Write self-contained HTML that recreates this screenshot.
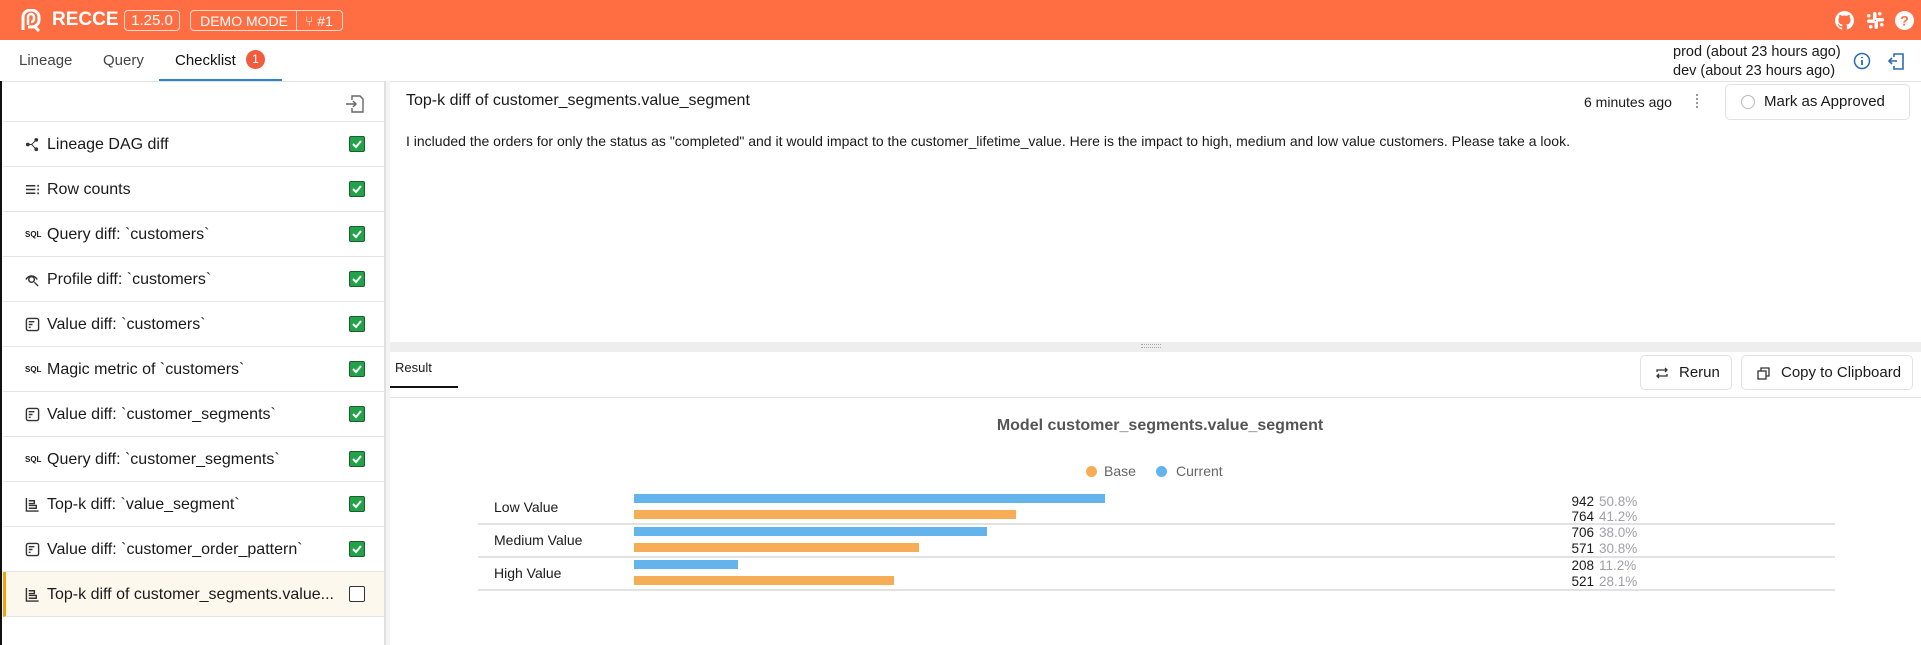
<!DOCTYPE html>
<html><head><meta charset="utf-8"><style>
*{box-sizing:border-box;margin:0;padding:0}
body{width:1921px;height:645px;overflow:hidden;background:#fff;font-family:"Liberation Sans",sans-serif;color:#1a1a1a;position:relative}
.a{position:absolute;white-space:nowrap}
.hdr{left:0;top:0;width:1921px;height:40px;background:#FF6E42}
.badge{border:1.5px solid rgba(255,255,255,.75);border-radius:4px;color:#fff;font-size:15px;height:21px;line-height:18px;padding:0 6px;top:10px;display:flex;align-items:center;justify-content:center}
.item{left:3px;width:381px;height:45px;border-bottom:1px solid #e4e4e4}
.item .t{position:absolute;left:44px;top:14px;font-size:16px}
.item .ic{position:absolute;left:22px;top:15px;width:15px;height:15px}
.cb{position:absolute;left:346px;top:14px;width:16px;height:16px;border-radius:2px;background:#22A34A;border:1px solid #1f5a30}
.cb svg{position:absolute;left:1px;top:1px}
.btn{border:1px solid #e2e2e2;border-radius:5px;background:#fff;font-size:15px}
.bar{position:absolute;left:634px;height:9px}
.b{background:#63B3ED}.o{background:#F6AD55}
.num{font-size:13.5px;width:60px;text-align:right;left:1534px}
.pct{font-size:13.5px;left:1599px;color:#a0a0a8}
.sep{left:478px;width:1357px;height:2px;background:#e2e2e2}
</style></head><body>
<div class="a hdr"></div>
<svg class="a" style="left:20px;top:9px" width="22" height="23" viewBox="0 0 22 23"><path d="M3 21V8a8 7 0 0 1 16 0v3a8 7 0 0 1-8 7h-3" fill="none" stroke="#fff" stroke-width="3"/><path d="M8 16V8a3 3 0 0 1 6 0v2a3 3 0 0 1-3 3" fill="none" stroke="#fff" stroke-width="2.5"/><path d="M14 17l5 5" stroke="#fff" stroke-width="3"/></svg>
<div class="a" style="left:52px;top:9px;color:#fff;font-weight:bold;font-size:19px">RECCE</div>
<div class="a badge" style="left:124px;width:56px">1.25.0</div>
<div class="a badge" style="left:190px;width:153px;font-size:14px">DEMO MODE <span style="display:inline-block;width:1px;height:19px;background:rgba(255,255,255,.7);margin:0 8px"></span>⑂ #1</div>
<svg class="a" style="left:1835px;top:11px" width="19" height="19" viewBox="0 0 16 16"><path fill="#fff" d="M8 0C3.6 0 0 3.6 0 8c0 3.5 2.3 6.5 5.5 7.6.4.1.5-.2.5-.4v-1.4c-2.2.5-2.7-1-2.7-1-.4-.9-.9-1.2-.9-1.2-.7-.5.1-.5.1-.5.8.1 1.2.8 1.2.8.7 1.2 1.9.9 2.3.7.1-.5.3-.9.5-1.1-1.8-.2-3.6-.9-3.6-4 0-.9.3-1.6.8-2.1-.1-.2-.4-1 .1-2.1 0 0 .7-.2 2.2.8.6-.2 1.3-.3 2-.3s1.4.1 2 .3c1.5-1 2.2-.8 2.2-.8.4 1.1.2 1.9.1 2.1.5.6.8 1.3.8 2.1 0 3.1-1.9 3.7-3.6 3.9.3.3.5.8.5 1.5v2.2c0 .2.1.5.6.4C13.7 14.5 16 11.5 16 8c0-4.4-3.6-8-8-8z"/></svg>
<svg class="a" style="left:1866px;top:11px" width="19" height="19" viewBox="0 0 19 19" fill="#fff"><rect x="7" y="1" width="3.5" height="8" rx="1.7"/><rect x="10" y="7" width="8" height="3.5" rx="1.7"/><rect x="8.5" y="10" width="3.5" height="8" rx="1.7"/><rect x="1" y="8.5" width="8" height="3.5" rx="1.7"/><rect x="12" y="1" width="3.5" height="3.5" rx="1.7"/><rect x="14" y="12" width="3.5" height="3.5" rx="1.7"/><rect x="3" y="14" width="3.5" height="3.5" rx="1.7"/><rect x="1" y="3" width="3.5" height="3.5" rx="1.7"/></svg>
<svg class="a" style="left:1895px;top:11px" width="19" height="19" viewBox="0 0 20 20"><circle cx="10" cy="10" r="10" fill="#fff"/><text x="10" y="15.5" text-anchor="middle" font-size="15" font-weight="bold" fill="#FF6E42" font-family="Liberation Sans">?</text></svg>

<div class="a" style="left:19px;top:52px;font-size:15px;color:#444">Lineage</div>
<div class="a" style="left:103px;top:52px;font-size:15px;color:#444">Query</div>
<div class="a" style="left:175px;top:52px;font-size:15px;color:#111">Checklist</div>
<div class="a" style="left:246px;top:50px;width:19px;height:19px;border-radius:50%;background:#F25C3C;color:#fff;font-size:12px;text-align:center;line-height:19px">1</div>
<div class="a" style="left:159px;top:79px;width:123px;height:2px;background:#3182CE"></div>
<div class="a" style="left:0;top:81px;width:1921px;height:1px;background:#e2e2e2"></div>
<div class="a" style="left:1673px;top:44px;font-size:14.5px">prod (about 23 hours ago)</div>
<div class="a" style="left:1673px;top:63px;font-size:14.5px">dev (about 23 hours ago)</div>
<svg class="a" style="left:1853px;top:52px" width="18" height="18" viewBox="0 0 18 18"><circle cx="9" cy="9" r="7.5" fill="none" stroke="#2b6cb0" stroke-width="1.5"/><path d="M9 8v5M9 5v1" stroke="#2b6cb0" stroke-width="1.8"/></svg>
<svg class="a" style="left:1888px;top:51px" width="18" height="20" viewBox="0 0 18 20"><path d="M6 6V3h9v15H6v-3M1 10h8M4 7l-3 3 3 3" fill="none" stroke="#2b6cb0" stroke-width="1.6"/></svg>

<div class="a" style="left:0;top:81px;width:2px;height:564px;background:#111"></div>
<div class="a" style="left:384px;top:81px;width:2px;height:564px;background:#e0e0e0"></div>
<div class="a" style="left:386px;top:81px;width:4px;height:564px;background:#f4f4f4"></div>
<svg class="a" style="left:345px;top:94px" width="20" height="20" viewBox="0 0 20 20"><path d="M7 6V2h8l3 3v13H7v-4M1 10h10M8 7l3 3-3 3" fill="none" stroke="#666" stroke-width="1.4"/></svg>
<div class="a" style="left:3px;top:121px;width:381px;height:1px;background:#e4e4e4"></div>

<div class="a item" style="top:122px"><svg class="ic" viewBox="0 0 16 16"><circle cx="3" cy="8" r="2" fill="#333"/><circle cx="12" cy="3" r="2" fill="#333"/><circle cx="12" cy="13" r="2" fill="#333"/><path d="M3 8h4l5-5M7 8l5 5" stroke="#333" fill="none"/></svg><span class="t">Lineage DAG diff</span><div class="cb"><svg width="12" height="12"><path d="M2 6l3 3 5-6" stroke="#fff" stroke-width="2" fill="none"/></svg></div></div>
<div class="a item" style="top:167px"><svg class="ic" viewBox="0 0 16 16"><path d="M1 4h10M1 8h10M1 12h10M14 3v2M14 7v2M14 11v2" stroke="#333" stroke-width="1.6"/></svg><span class="t">Row counts</span><div class="cb"><svg width="12" height="12"><path d="M2 6l3 3 5-6" stroke="#fff" stroke-width="2" fill="none"/></svg></div></div>
<div class="a item" style="top:212px"><span class="ic" style="font-size:8px;font-weight:bold;top:18px">SQL</span><span class="t">Query diff: `customers`</span><div class="cb"><svg width="12" height="12"><path d="M2 6l3 3 5-6" stroke="#fff" stroke-width="2" fill="none"/></svg></div></div>
<div class="a item" style="top:257px"><svg class="ic" viewBox="0 0 16 16"><path d="M1 8c3-5 9-5 12 0" stroke="#333" fill="none" stroke-width="1.5"/><circle cx="7" cy="8" r="3" fill="none" stroke="#333" stroke-width="1.5"/><path d="M10 11l4 4" stroke="#333" stroke-width="1.5"/></svg><span class="t">Profile diff: `customers`</span><div class="cb"><svg width="12" height="12"><path d="M2 6l3 3 5-6" stroke="#fff" stroke-width="2" fill="none"/></svg></div></div>
<div class="a item" style="top:302px"><svg class="ic" viewBox="0 0 16 16"><rect x="1.5" y="1.5" width="13" height="13" rx="2" fill="none" stroke="#333" stroke-width="1.5"/><path d="M4 5h6M4 8h4M4 11h2" stroke="#333" stroke-width="1.5"/></svg><span class="t">Value diff: `customers`</span><div class="cb"><svg width="12" height="12"><path d="M2 6l3 3 5-6" stroke="#fff" stroke-width="2" fill="none"/></svg></div></div>
<div class="a item" style="top:347px"><span class="ic" style="font-size:8px;font-weight:bold;top:18px">SQL</span><span class="t">Magic metric of `customers`</span><div class="cb"><svg width="12" height="12"><path d="M2 6l3 3 5-6" stroke="#fff" stroke-width="2" fill="none"/></svg></div></div>
<div class="a item" style="top:392px"><svg class="ic" viewBox="0 0 16 16"><rect x="1.5" y="1.5" width="13" height="13" rx="2" fill="none" stroke="#333" stroke-width="1.5"/><path d="M4 5h6M4 8h4M4 11h2" stroke="#333" stroke-width="1.5"/></svg><span class="t">Value diff: `customer_segments`</span><div class="cb"><svg width="12" height="12"><path d="M2 6l3 3 5-6" stroke="#fff" stroke-width="2" fill="none"/></svg></div></div>
<div class="a item" style="top:437px"><span class="ic" style="font-size:8px;font-weight:bold;top:18px">SQL</span><span class="t">Query diff: `customer_segments`</span><div class="cb"><svg width="12" height="12"><path d="M2 6l3 3 5-6" stroke="#fff" stroke-width="2" fill="none"/></svg></div></div>
<div class="a item" style="top:482px"><svg class="ic" viewBox="0 0 16 16"><path d="M1.5 1v14h13M4 4h6v3H4M4 9h8v3H4" fill="none" stroke="#333" stroke-width="1.5"/></svg><span class="t">Top-k diff: `value_segment`</span><div class="cb"><svg width="12" height="12"><path d="M2 6l3 3 5-6" stroke="#fff" stroke-width="2" fill="none"/></svg></div></div>
<div class="a item" style="top:527px"><svg class="ic" viewBox="0 0 16 16"><rect x="1.5" y="1.5" width="13" height="13" rx="2" fill="none" stroke="#333" stroke-width="1.5"/><path d="M4 5h6M4 8h4M4 11h2" stroke="#333" stroke-width="1.5"/></svg><span class="t">Value diff: `customer_order_pattern`</span><div class="cb"><svg width="12" height="12"><path d="M2 6l3 3 5-6" stroke="#fff" stroke-width="2" fill="none"/></svg></div></div>
<div class="a item" style="top:572px;background:#FDF8EE;border-left:3px solid #F5A20A;left:3px"><svg class="ic" viewBox="0 0 16 16" style="left:19px"><path d="M1.5 1v14h13M4 4h6v3H4M4 9h8v3H4" fill="none" stroke="#333" stroke-width="1.5"/></svg><span class="t" style="left:41px">Top-k diff of customer_segments.value...</span><div class="cb" style="background:#fff;border:1px solid #333;left:343px"></div></div>

<div class="a" style="left:406px;top:92px;font-size:16px">Top-k diff of customer_segments.value_segment</div>
<div class="a" style="left:1584px;top:94px;font-size:14px">6 minutes ago</div>
<div class="a" style="left:1696px;top:94px;width:2px;height:14px;border-left:2px dotted #999"></div>
<div class="a btn" style="left:1725px;top:84px;width:185px;height:36px"><span style="position:absolute;left:15px;top:10px;width:14px;height:14px;border:1px solid #bbb;border-radius:50%"></span><span style="position:absolute;left:38px;top:8px">Mark as Approved</span></div>
<div class="a" style="left:406px;top:133px;font-size:14px">I included the orders for only the status as "completed" and it would impact to the customer_lifetime_value. Here is the impact to high, medium and low value customers. Please take a look.</div>

<div class="a" style="left:390px;top:342px;width:1531px;height:10px;background:#eeeeee"></div>
<div class="a" style="left:1141px;top:344px;width:20px;height:4px;border-top:1px dotted #aaa;border-bottom:1px dotted #aaa"></div>
<div class="a" style="left:395px;top:360px;font-size:13px">Result</div>
<div class="a" style="left:390px;top:386px;width:68px;height:2px;background:#111"></div>
<div class="a" style="left:390px;top:397px;width:1531px;height:1px;background:#e2e2e2"></div>
<div class="a btn" style="left:1640px;top:355px;width:92px;height:35px"><svg style="position:absolute;left:14px;top:11px" width="14" height="12" viewBox="0 0 14 12"><path d="M2 5V3h10M10 1l2 2-2 2M12 7v2H2M4 11L2 9l2-2" fill="none" stroke="#333" stroke-width="1.3"/></svg><span style="position:absolute;left:38px;top:8px">Rerun</span></div>
<div class="a btn" style="left:1741px;top:355px;width:172px;height:35px"><svg style="position:absolute;left:15px;top:11px" width="13" height="13" viewBox="0 0 13 13"><rect x="1" y="4" width="8" height="8" fill="none" stroke="#333" stroke-width="1.3"/><path d="M4 4V1h8v8H9" fill="none" stroke="#333" stroke-width="1.3"/></svg><span style="position:absolute;left:39px;top:8px">Copy to Clipboard</span></div>

<div class="a" style="left:990px;top:417px;width:340px;text-align:center;font-size:16px;font-weight:bold;color:#555">Model customer_segments.value_segment</div>
<div class="a" style="left:1086px;top:466px;width:11px;height:11px;border-radius:50%;background:#F6AD55"></div>
<div class="a" style="left:1104px;top:463px;font-size:14px;color:#666">Base</div>
<div class="a" style="left:1156px;top:466px;width:11px;height:11px;border-radius:50%;background:#63B3ED"></div>
<div class="a" style="left:1176px;top:463px;font-size:14px;color:#666">Current</div>

<div class="a" style="left:494px;top:499px;font-size:14px">Low Value</div>
<div class="a" style="left:494px;top:532px;font-size:14px">Medium Value</div>
<div class="a" style="left:494px;top:565px;font-size:14px">High Value</div>
<div class="bar b" style="top:494px;width:471px"></div>
<div class="bar o" style="top:510px;width:382px"></div>
<div class="bar b" style="top:527px;width:353px"></div>
<div class="bar o" style="top:543px;width:285px"></div>
<div class="bar b" style="top:560px;width:104px"></div>
<div class="bar o" style="top:576px;width:260px"></div>
<div class="a sep" style="top:523px"></div>
<div class="a sep" style="top:556px"></div>
<div class="a sep" style="top:589px"></div>
<div class="a num" style="top:494px">942</div><div class="a pct" style="top:494px">50.8%</div>
<div class="a num" style="top:509px">764</div><div class="a pct" style="top:509px">41.2%</div>
<div class="a num" style="top:525px">706</div><div class="a pct" style="top:525px">38.0%</div>
<div class="a num" style="top:541px">571</div><div class="a pct" style="top:541px">30.8%</div>
<div class="a num" style="top:558px">208</div><div class="a pct" style="top:558px">11.2%</div>
<div class="a num" style="top:574px">521</div><div class="a pct" style="top:574px">28.1%</div>
</body></html>
